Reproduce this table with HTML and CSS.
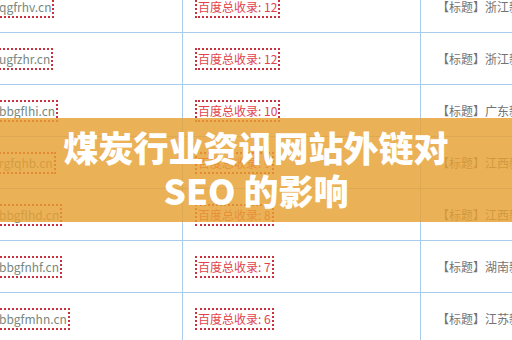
FILE: index.html
```html
<!DOCTYPE html>
<html lang="zh-CN">
<head>
<meta charset="utf-8">
<link rel="stylesheet" href="styles.css">
</head>
<body>
<div class="page">
  <div class="table">
    <div class="row"><div class="c1"><span class="box dom">qgfrhv.cn</span></div><div class="c2"><span class="box cnt">百度总收录: 12</span></div><div class="c3">【标题】浙江新闻网站</div></div>
    <div class="row"><div class="c1"><span class="box dom">ugfzhr.cn</span></div><div class="c2"><span class="box cnt">百度总收录: 12</span></div><div class="c3">【标题】浙江新闻网站</div></div>
    <div class="row"><div class="c1"><span class="box dom">bbgflhi.cn</span></div><div class="c2"><span class="box cnt">百度总收录: 10</span></div><div class="c3">【标题】广东新闻网站</div></div>
    <div class="row"><div class="c1"><span class="box dom">rgfqhb.cn</span></div><div class="c2"><span class="box cnt">百度总收录: 9</span></div><div class="c3">【标题】江西新闻网站</div></div>
    <div class="row"><div class="c1"><span class="box dom">bbgflhd.cn</span></div><div class="c2"><span class="box cnt">百度总收录: 8</span></div><div class="c3">【标题】江西新闻网站</div></div>
    <div class="row"><div class="c1"><span class="box dom">bbgfnhf.cn</span></div><div class="c2"><span class="box cnt">百度总收录: 7</span></div><div class="c3">【标题】湖南新闻网站</div></div>
    <div class="row"><div class="c1"><span class="box dom">bbgfmhn.cn</span></div><div class="c2"><span class="box cnt">百度总收录: 6</span></div><div class="c3">【标题】江苏新闻网站</div></div>
  </div>
  <div class="banner">
    <h1 class="title">煤炭行业资讯网站外链对<br>SEO 的影响</h1>
  </div>
</div>
</body>
</html>
```
FILE: styles.css
```css
html, body {
  margin: 0;
  padding: 0;
  background: #fff;
}
.page {
  position: relative;
  width: 512px;
  height: 340px;
  overflow: hidden;
  background: #fff;
  font-family: "Noto Sans CJK SC", "Microsoft YaHei", sans-serif;
  font-size: 12px;
}
.table {
  margin-top: -19px;
  margin-left: -17px;
  width: 700px;
}
.row {
  display: grid;
  grid-template-columns: 200px 238px 1fr;
  height: 52px;
  box-sizing: border-box;
  border-bottom: 1px solid #a9cbec;
}
.c1, .c2, .c3 {
  display: flex;
  align-items: center;
  white-space: nowrap;
}
.c1, .c2 {
  border-right: 1px solid #a9cbec;
}
.c1 {
  padding-left: 13px;
}
.c2 {
  padding-left: 12px;
}
.c3 {
  padding-left: 16px;
  color: #737373;
}
.box {
  display: inline-block;
  border: 2px dotted #c8323e;
  padding: 1px 1px;
  line-height: 16px;
}
.dom {
  color: #78887e;
}
.cnt {
  color: #e2434b;
}
.banner {
  position: absolute;
  left: 0;
  top: 118px;
  width: 512px;
  height: 104px;
  background: rgba(230, 160, 50, 0.82);
  display: flex;
  align-items: center;
  justify-content: center;
}
.title {
  margin: 0 0 4px;
  color: #fff;
  font-size: 35px;
  font-weight: 900;
  line-height: 43px;
  text-align: center;
}
```
